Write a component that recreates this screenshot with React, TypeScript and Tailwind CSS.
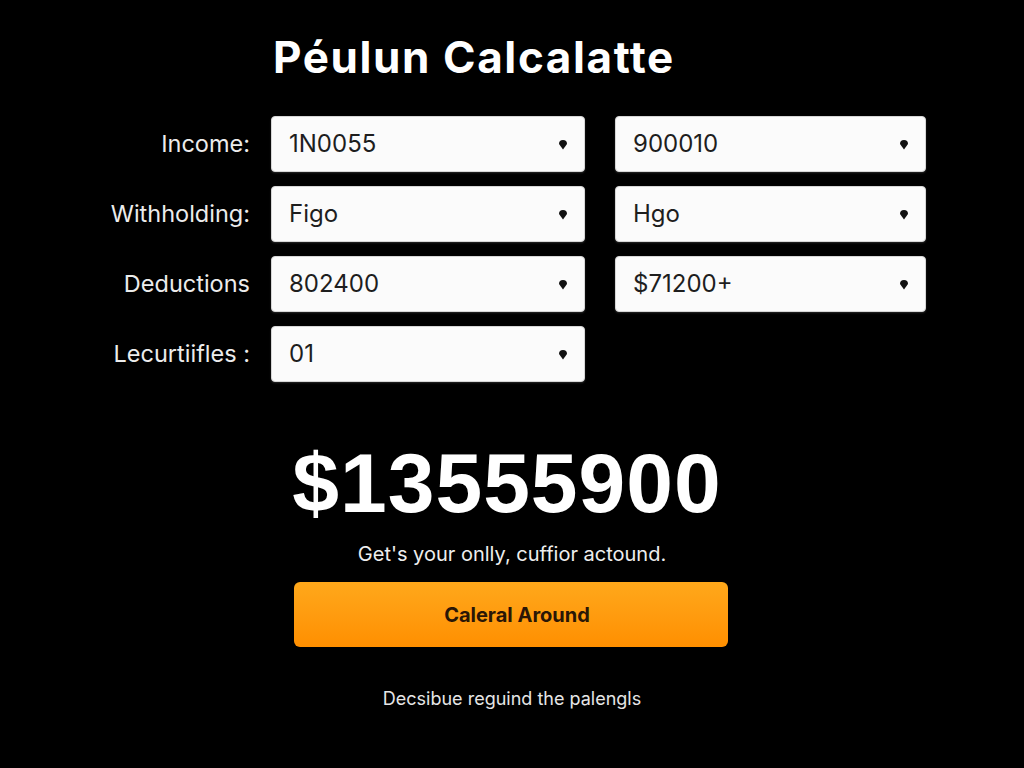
import React from "react";

const rows: { label: string; left: string; right?: string }[] = [
  { label: "Income:", left: "1N0055", right: "900010" },
  { label: "Withholding:", left: "Figo", right: "Hgo" },
  { label: "Deductions", left: "802400", right: "$71200+" },
  { label: "Lecurtiifles :", left: "01" },
];

function Drop() {
  return (
    <svg width="10" height="11" viewBox="0 0 10 11" className="shrink-0">
      <path d="M5 10.5 L1 5 A4 4 0 1 1 9 5 Z" fill="#111" />
    </svg>
  );
}

function Field({ value, w }: { value: string; w: string }) {
  return (
    <div
      className={`${w} h-[56px] flex items-center justify-between pl-[17px] pr-[16px] bg-[#fbfbfb] rounded-[4px] border border-[#d6d6d6] shadow-[0_1px_2px_rgba(255,255,255,0.15)]`}
    >
      <span className="text-[24px] text-[#1e1e1e] font-['Inter',sans-serif]">{value}</span>
      <Drop />
    </div>
  );
}

export default function App() {
  return (
    <div className="w-[1024px] h-[768px] bg-black overflow-hidden flex flex-col font-['Inter',sans-serif]">
      <h1 className="mt-[32px] ml-[273px] text-[44px] leading-[50px] font-bold text-white tracking-[1.6px]">
        Péulun Calcalatte
      </h1>

      <div className="mt-[34px] flex flex-col gap-[14px]">
        {rows.map((r) => (
          <div key={r.label} className="flex items-center">
            <div className="w-[250px] text-right text-[23.5px] text-[#ececec]">{r.label}</div>
            <div className="ml-[21px]">
              <Field value={r.left} w="w-[314px]" />
            </div>
            {r.right && (
              <div className="ml-[30px]">
                <Field value={r.right} w="w-[311px]" />
              </div>
            )}
          </div>
        ))}
      </div>

      <div className="mt-[56px] flex flex-col items-center">
        <div className="text-[84px] leading-[90px] font-bold text-white font-['Liberation_Sans',Arial,sans-serif] tracking-[1px] ml-[-10px]">
          $13555900
        </div>
        <p className="mt-[12px] text-[20px] leading-[28px] text-[#eeeeee]">Get's your onlly, cuffior actound.</p>
        <button className="mt-[14px] w-[434px] h-[65px] ml-[-2px] rounded-[6px] bg-gradient-to-b from-[#ffa81a] to-[#ff8f00] text-[20px] font-bold text-[#2a1606]">
          <span className="ml-[12px]">Caleral Around</span>
        </button>
        <p className="mt-[39px] text-[18px] leading-[26px] text-[#e6e6e6]">Decsibue reguind the palengls</p>
      </div>
    </div>
  );
}
